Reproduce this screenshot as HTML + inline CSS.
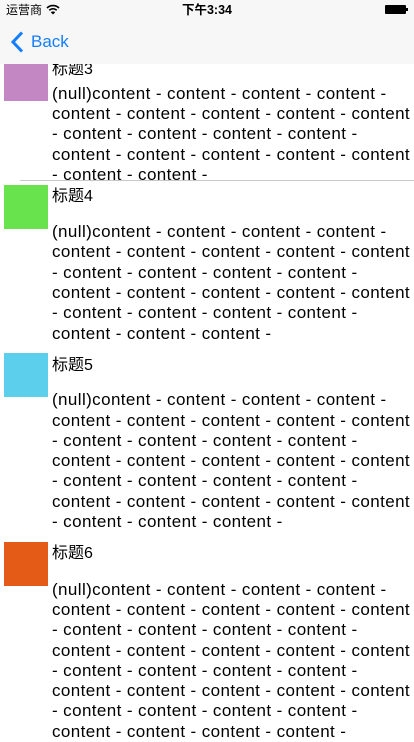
<!DOCTYPE html>
<html><head><meta charset="utf-8"><style>
*{margin:0;padding:0}
body{width:414px;height:736px;overflow:hidden;background:#fff;position:relative;font-family:"Liberation Sans","Noto Sans CJK SC",sans-serif;color:#000}
.l{position:absolute;left:52px;height:20px;line-height:20px;font-size:17px;letter-spacing:0.4px;white-space:nowrap;margin-top:1px}
.t{position:absolute;left:52px;height:20px;line-height:20px;font-size:16px;white-space:nowrap;margin-top:1px}
.sq{position:absolute;left:4px;width:44px;height:44px}
#nav{position:absolute;left:0;top:0;width:414px;height:64px;background:#f7f7f7;z-index:5}
</style></head><body>
<div id="nav">
<div style="position:absolute;left:6px;top:3px;font-size:12px;line-height:14px">运营商</div>
<svg style="position:absolute;left:46px;top:4px" width="14" height="11" viewBox="0 0 14 11"><path d="M1 4 A8.5 8.5 0 0 1 13 4" stroke="#000" stroke-width="1.6" fill="none"/><path d="M3.3 6.3 A5.2 5.2 0 0 1 10.7 6.3" stroke="#000" stroke-width="1.6" fill="none"/><path d="M7 10.5 L4.8 8.3 A3 3 0 0 1 9.2 8.3 Z" fill="#000"/></svg>
<div style="position:absolute;left:0;width:414px;top:3px;text-align:center;font-size:12.5px;line-height:14px;font-weight:bold">下午3:34</div>
<div style="position:absolute;left:385px;top:5px;width:21px;height:9px;background:#000;border-radius:1px"></div>
<div style="position:absolute;left:406px;top:8px;width:1.5px;height:3px;background:#000"></div>
<svg style="position:absolute;left:11px;top:31px" width="13" height="22" viewBox="0 0 13 22"><path d="M11 1.5 L2 11 L11 20.5" stroke="#147efb" stroke-width="3" fill="none"/></svg>
<div style="position:absolute;left:31px;top:31px;font-size:17px;line-height:22px;color:#147efb">Back</div>
</div>

<div class="sq" style="top:57px;background:#c387c3"></div>
<div class="t" style="top:59px">标题3</div>
<div class="l" style="top:83px">(null)content - content - content - content -</div>
<div class="l" style="top:103px">content - content - content - content - content</div>
<div class="l" style="top:123px">- content - content - content - content -</div>
<div class="l" style="top:144px">content - content - content - content - content</div>
<div class="l" style="top:164px">- content - content -</div>
<div style="position:absolute;left:20px;top:180px;width:394px;height:1px;background:#c8c8cc"></div>

<div class="sq" style="top:185px;background:#68e34d"></div>
<div class="t" style="top:186px">标题4</div>
<div class="l" style="top:221px">(null)content - content - content - content -</div>
<div class="l" style="top:241px">content - content - content - content - content</div>
<div class="l" style="top:262px">- content - content - content - content -</div>
<div class="l" style="top:282px">content - content - content - content - content</div>
<div class="l" style="top:302px">- content - content - content - content -</div>
<div class="l" style="top:323px">content - content - content -</div>

<div class="sq" style="top:353px;background:#5ccfed"></div>
<div class="t" style="top:355px">标题5</div>
<div class="l" style="top:389px">(null)content - content - content - content -</div>
<div class="l" style="top:410px">content - content - content - content - content</div>
<div class="l" style="top:430px">- content - content - content - content -</div>
<div class="l" style="top:450px">content - content - content - content - content</div>
<div class="l" style="top:470px">- content - content - content - content -</div>
<div class="l" style="top:491px">content - content - content - content - content</div>
<div class="l" style="top:511px">- content - content - content -</div>

<div class="sq" style="top:542px;background:#e35b16"></div>
<div class="t" style="top:543px">标题6</div>
<div class="l" style="top:579px">(null)content - content - content - content -</div>
<div class="l" style="top:599px">content - content - content - content - content</div>
<div class="l" style="top:619px">- content - content - content - content -</div>
<div class="l" style="top:640px">content - content - content - content - content</div>
<div class="l" style="top:660px">- content - content - content - content -</div>
<div class="l" style="top:680px">content - content - content - content - content</div>
<div class="l" style="top:700px">- content - content - content - content -</div>
<div class="l" style="top:721px">content - content - content - content -</div>
</body></html>
